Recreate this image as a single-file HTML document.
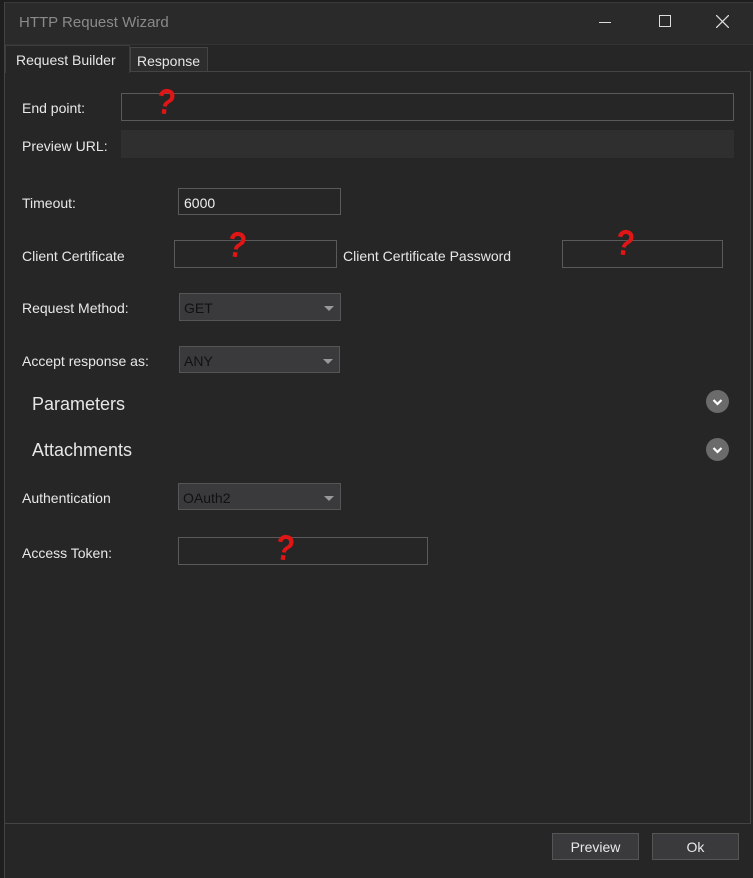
<!DOCTYPE html>
<html><head><style>
*{margin:0;padding:0;box-sizing:border-box}
body{width:753px;height:878px;background:#1e1e1e;font-family:"Liberation Sans",sans-serif;font-size:14px;color:#e6e6e6;position:relative;overflow:hidden}
.win{position:absolute;left:4px;top:2px;width:749px;height:876px;background:#262626;border-left:1px solid #444;border-top:1px solid #3a3a3a}
.title{position:absolute;left:5px;top:3px;width:748px;height:41px;background:#2a2a2a}
.a{position:absolute}
.lbl{position:absolute;font-size:14px;color:#e8e8e8}
.inp{position:absolute;border:1px solid #5a5a5a;background:#262626}
.cmb{position:absolute;border:1px solid #555;background:#3a3a3c;color:#111;font-size:14px;padding:6px 0 0 4px}
.cmb:after{content:"";position:absolute;right:6px;top:12px;border-left:5px solid transparent;border-right:5px solid transparent;border-top:5px solid #999}
.q{position:absolute;color:#e01515;font-size:36px;font-weight:bold;font-family:"Liberation Sans",sans-serif;transform:rotate(8deg) scaleX(0.85);line-height:36px}
.chev{position:absolute;width:23px;height:23px;border-radius:50%;background:#6b6b6b}
.btn{position:absolute;background:#3a3a3c;border:1px solid #555;color:#e8e8e8;text-align:center;font-size:14px;line-height:26px}
</style></head><body>
<div class="win"></div>
<div class="title"></div>
<div class="a" style="left:19px;top:14px;font-size:15px;color:#8a8a8a">HTTP Request Wizard</div>
<div class="a" style="left:599px;top:22px;width:12px;height:1px;background:#ddd"></div>
<div class="a" style="left:659px;top:15px;width:12px;height:12px;border:1px solid #ddd"></div>
<svg class="a" style="left:716px;top:15px" width="13" height="13"><path d="M0 0L13 13M13 0L0 13" stroke="#ddd" stroke-width="1.3"/></svg>
<div class="a" style="left:5px;top:44px;width:748px;height:1px;background:#333"></div>
<div class="a" style="left:5px;top:45px;width:125px;height:28px;background:#262626;border:1px solid #3c3c3c;border-bottom:none"></div>
<div class="a" style="left:16px;top:52px;font-size:14px">Request Builder</div>
<div class="a" style="left:130px;top:47px;width:78px;height:25px;background:#2d2d2d;border:1px solid #444"></div>
<div class="a" style="left:137px;top:53px;font-size:14px">Response</div>
<div class="a" style="left:208px;top:71px;width:542px;height:1px;background:#444"></div>
<div class="a" style="left:750px;top:71px;width:1px;height:753px;background:#444"></div>
<div class="a" style="left:5px;top:823px;width:746px;height:1px;background:#444"></div>

<div class="lbl" style="left:22px;top:100px">End point:</div>
<div class="inp" style="left:121px;top:93px;width:613px;height:28px"></div>
<div class="q" style="left:155px;top:84px">?</div>
<div class="lbl" style="left:22px;top:138px">Preview URL:</div>
<div class="a" style="left:121px;top:130px;width:613px;height:28px;background:#2f2f2f"></div>

<div class="lbl" style="left:22px;top:195px">Timeout:</div>
<div class="inp" style="left:178px;top:188px;width:163px;height:27px;color:#eee;padding:6px 0 0 5px">6000</div>

<div class="lbl" style="left:22px;top:248px">Client Certificate</div>
<div class="inp" style="left:174px;top:240px;width:163px;height:28px"></div>
<div class="q" style="left:226px;top:227px">?</div>
<div class="lbl" style="left:343px;top:248px">Client Certificate Password</div>
<div class="inp" style="left:562px;top:240px;width:161px;height:28px"></div>
<div class="q" style="left:614px;top:225px">?</div>

<div class="lbl" style="left:22px;top:300px">Request Method:</div>
<div class="cmb" style="left:179px;top:293px;width:162px;height:28px">GET</div>
<div class="lbl" style="left:22px;top:353px">Accept response as:</div>
<div class="cmb" style="left:179px;top:346px;width:161px;height:27px">ANY</div>

<div class="a" style="left:32px;top:394px;font-size:18px">Parameters</div>
<div class="chev" style="left:706px;top:390px"><svg width="23" height="23"><path d="M7.5 10L11.5 14L15.5 10" stroke="#fff" stroke-width="2.2" fill="none"/></svg></div>
<div class="a" style="left:32px;top:440px;font-size:18px">Attachments</div>
<div class="chev" style="left:706px;top:438px"><svg width="23" height="23"><path d="M7.5 10L11.5 14L15.5 10" stroke="#fff" stroke-width="2.2" fill="none"/></svg></div>

<div class="lbl" style="left:22px;top:490px">Authentication</div>
<div class="cmb" style="left:178px;top:483px;width:163px;height:27px">OAuth2</div>
<div class="lbl" style="left:22px;top:545px">Access Token:</div>
<div class="inp" style="left:178px;top:537px;width:250px;height:28px"></div>
<div class="q" style="left:274px;top:530px">?</div>

<div class="btn" style="left:552px;top:833px;width:87px;height:27px">Preview</div>
<div class="btn" style="left:652px;top:833px;width:87px;height:27px">Ok</div>
</body></html>
